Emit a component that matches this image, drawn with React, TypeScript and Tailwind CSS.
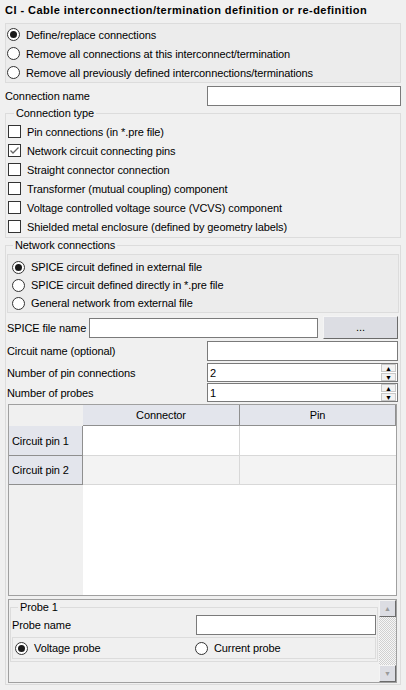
import type { ReactNode } from "react";

function Radio({ checked, children }: { checked?: boolean; children: ReactNode }) {
  return (
    <label className="flex h-[19px] items-center gap-[6px]">
      <span className="flex h-[13px] w-[13px] shrink-0 items-center justify-center rounded-full border border-[#333333] bg-white">
        {checked && <span className="h-[7px] w-[7px] rounded-full bg-[#1a1a1a]" />}
      </span>
      <span>{children}</span>
    </label>
  );
}

function Check({ checked, children }: { checked?: boolean; children: ReactNode }) {
  return (
    <label className="flex h-[19px] items-center gap-[6px]">
      <span className="flex h-[13px] w-[13px] shrink-0 items-center justify-center border border-[#333333] bg-white">
        {checked && (
          <svg viewBox="0 0 11 11" className="h-[11px] w-[11px]" fill="none" stroke="#666666" strokeWidth={1.3}>
            <polyline points="1.5,5.5 4,8 9.5,2.5" />
          </svg>
        )}
      </span>
      <span>{children}</span>
    </label>
  );
}

function Field({ className = "" }: { className?: string }) {
  return <div className={`border border-[#7a7a7a] bg-white ${className}`} />;
}

function Spin({ value }: { value: string }) {
  return (
    <div className="flex h-[19px] w-[191px] items-center border border-[#7a7a7a] bg-white pl-[2px]">
      <span className="flex-1">{value}</span>
      <div className="mr-[1px] flex h-[17px] w-[15px] flex-col">
        <span className="flex h-[8px] items-center justify-center border border-[#c8c8c8] bg-[#f2f2f2] text-[7px] leading-none">
          ▲
        </span>
        <span className="mt-[1px] flex h-[8px] items-center justify-center border border-[#c8c8c8] bg-[#f2f2f2] text-[7px] leading-none">
          ▼
        </span>
      </div>
    </div>
  );
}

function Group({ title, className = "", children }: { title: string; className?: string; children: ReactNode }) {
  return (
    <fieldset className={`border border-[#dcdcdc] ${className}`}>
      <legend className="ml-[6px] px-[2px] leading-[14px]">{title}</legend>
      {children}
    </fieldset>
  );
}

export default function App() {
  return (
    <div
      className="h-[690px] w-[406px] overflow-hidden bg-[#f0f0f0] px-[5px] pt-[3px] text-[11px] leading-[14px] tracking-[-0.1px] text-black"
      style={{ fontFamily: '"Liberation Sans", Arial, sans-serif' }}
    >
      <div className="h-[14px] font-bold tracking-[0.45px]">
        CI - Cable interconnection/termination definition or re-definition
      </div>

      <div className="mt-[6px] flex h-[60px] flex-col border border-[#dcdcdc] bg-[#ececec] pl-[1px] pt-[1px]">
        <Radio checked>Define/replace connections</Radio>
        <Radio>Remove all connections at this interconnect/termination</Radio>
        <Radio>Remove all previously defined interconnections/terminations</Radio>
      </div>

      <div className="mt-[3px] flex h-[20px] items-center justify-between">
        <span>Connection name</span>
        <Field className="h-[20px] w-[194px]" />
      </div>

      <Group title="Connection type" className="h-[132px] pl-[2px] pt-[2px]">
        <Check>Pin connections (in *.pre file)</Check>
        <Check checked>Network circuit connecting pins</Check>
        <Check>Straight connector connection</Check>
        <Check>Transformer (mutual coupling) component</Check>
        <Check>Voltage controlled voltage source (VCVS) component</Check>
        <Check>Shielded metal enclosure (defined by geometry labels)</Check>
      </Group>

      <Group title="Network connections" className="px-[1px] pb-[1px]">
        <div className="mt-[2px] flex h-[59px] flex-col border border-[#dcdcdc] bg-[#ececec] pl-[4px] pt-[3px]">
          <Radio checked>SPICE circuit defined in external file</Radio>
          <Radio>SPICE circuit defined directly in *.pre file</Radio>
          <Radio>General network from external file</Radio>
        </div>

        <div className="mt-[3px] flex h-[23px] items-center pr-[1px]">
          <span className="w-[82px]">SPICE file name</span>
          <Field className="h-[20px] w-[229px]" />
          <button className="ml-[5px] h-[23px] flex-1 border border-b-[#6b6b6b] border-l-[#f4f4f4] border-r-[#6b6b6b] border-t-[#f4f4f4] bg-[#dcdde3] leading-none">
            ...
          </button>
        </div>

        <div className="mt-[2px] flex h-[20px] items-center justify-between pr-[1px]">
          <span>Circuit name (optional)</span>
          <Field className="h-[20px] w-[191px]" />
        </div>
        <div className="mt-[2px] flex h-[19px] items-center justify-between pr-[1px]">
          <span>Number of pin connections</span>
          <Spin value="2" />
        </div>
        <div className="mt-[1px] flex h-[19px] items-center justify-between pr-[1px]">
          <span>Number of probes</span>
          <Spin value="1" />
        </div>

        <div className="ml-[1px] mt-[2px] flex h-[192px] w-[389px] flex-col border border-[#a0a0a0]">
          <div className="grid h-[21px] grid-cols-[74px_157px_156px]">
            <div className="bg-[#f0f0f0]" />
            <div className="flex items-center justify-center border-b border-r border-b-[#8f8f8f] border-r-[#8f8f8f] bg-[#e3e5ec]">
              Connector
            </div>
            <div className="flex items-center justify-center border-b border-r border-b-[#8f8f8f] border-r-[#8f8f8f] bg-[#e3e5ec]">
              Pin
            </div>
          </div>
          {["Circuit pin 1", "Circuit pin 2"].map((p, i) => (
            <div key={p} className={`grid grid-cols-[74px_157px_156px] ${i === 0 ? "h-[30px]" : "h-[29px]"}`}>
              <div className="flex items-center border-b border-r border-b-[#8f8f8f] border-r-[#8f8f8f] bg-[#e3e5ec] pl-[3px]">
                {p}
              </div>
              <div className={`border-b border-r border-[#d8d8d8] ${i === 0 ? "bg-white" : "bg-[#f3f3f3]"}`} />
              <div className={`border-b border-[#d8d8d8] ${i === 0 ? "bg-white" : "bg-[#f3f3f3]"}`} />
            </div>
          ))}
          <div className="grid flex-1 grid-cols-[74px_1fr]">
            <div className="bg-[#f0f0f0]" />
            <div className="bg-white" />
          </div>
        </div>

        <div className="ml-[1px] mt-[3px] flex h-[84px] w-[389px] border border-[#a0a0a0]">
          <div className="flex-1 pl-[1px] pr-[1px]">
            <Group title="Probe 1" className="h-[62px] px-[1px]">
              <div className="mt-[1px] flex h-[20px] items-center justify-between">
                <span>Probe name</span>
                <Field className="h-[20px] w-[180px]" />
              </div>
              <div className="mt-[2px] flex h-[22px] items-center border border-[#dcdcdc] pl-[2px]">
                <div className="w-[180px]">
                  <Radio checked>Voltage probe</Radio>
                </div>
                <Radio>Current probe</Radio>
              </div>
            </Group>
          </div>
          <div className="flex w-[17px] flex-col bg-[repeating-conic-gradient(#d0d0d0_0%_25%,#f6f6f6_0%_50%)] bg-[length:2px_2px]">
            <div className="flex h-[17px] items-center justify-center border border-b-[#6b6b6b] border-l-[#f4f4f4] border-r-[#6b6b6b] border-t-[#f4f4f4] bg-[#dcdde3] text-[7px] text-[#9a9a9a]">
              ▲
            </div>
            <div className="flex-1" />
            <div className="flex h-[17px] items-center justify-center border border-b-[#6b6b6b] border-l-[#f4f4f4] border-r-[#6b6b6b] border-t-[#f4f4f4] bg-[#dcdde3] text-[7px] text-[#9a9a9a]">
              ▼
            </div>
          </div>
        </div>
      </Group>
    </div>
  );
}
